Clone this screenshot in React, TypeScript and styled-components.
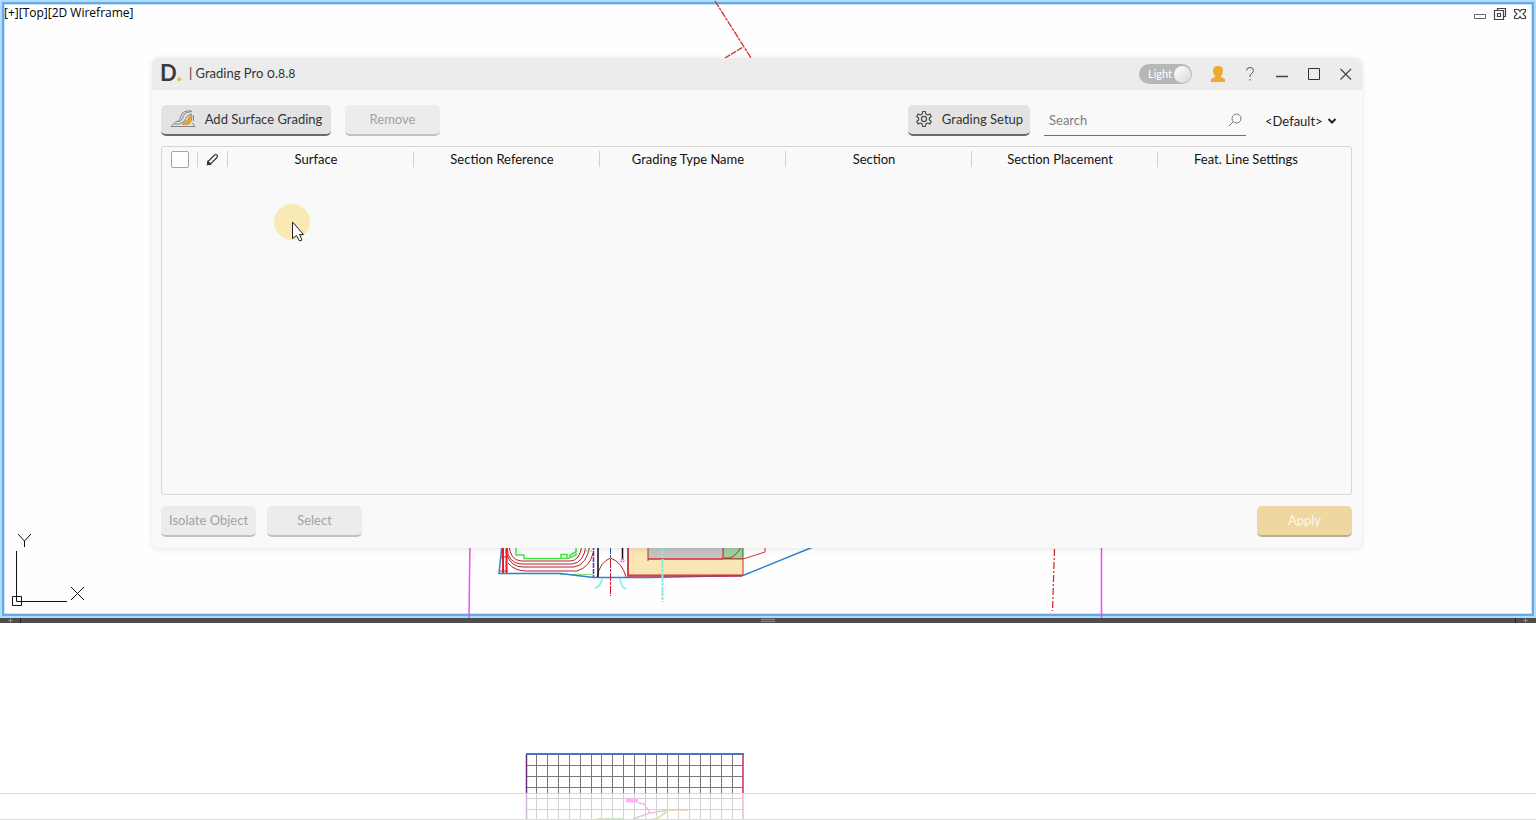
import React from "react";
import styled, { createGlobalStyle } from "styled-components";

const GlobalStyle = createGlobalStyle`
  *, *::before, *::after { box-sizing: border-box; }
  body {
    margin: 0;
    background: #ffffff;
    font-family: Lato, "Open Sans", sans-serif;
    font-size: 13px;
    line-height: 16px;
    color: #222222;
  }
  button, input, select { font: inherit; color: inherit; }
`;

const Screen = styled.main`
  display: grid;
  grid-template-rows: minmax(0, 618fr) 5px minmax(0, 197fr);
  height: 100vh;
  overflow: hidden;
`;

const Viewport = styled.section`
  position: relative;
  overflow: hidden;
  background: #fefefe;
`;

const ViewportFrame = styled.div`
  position: absolute;
  inset: 0;
  border: 2px solid #b3dcf8;
  box-shadow: inset 0 0 0 2px #65a9ec, inset 0 0 0 3px #c2e2fa;
  pointer-events: none;
`;

const Drawing = styled.svg`
  position: absolute;
  top: 0;
  left: 0;
  width: 100%;
  height: 100%;
  fill: none;
`;

const ViewportBar = styled.header`
  position: relative;
  display: flex;
  justify-content: space-between;
  padding: 5px 8px 0 4px;
`;

const ViewLabel = styled.span`
  font-family: "Open Sans", sans-serif;
  font-size: 12px;
  color: #000000;
`;

const ViewControls = styled.div`
  display: flex;
  gap: 4px;
`;

const PlainButton = styled.button<{ $w: number; $h: number }>`
  display: flex;
  align-items: center;
  justify-content: center;
  width: ${(p) => p.$w}px;
  height: ${(p) => p.$h}px;
  padding: 0;
  border: 0;
  background: none;
`;

const Splitter = styled.div`
  display: flex;
  align-items: center;
  justify-content: space-between;
  padding: 0 8px;
  background: #4d4d4f;
  svg { display: block; }
`;

const LowerView = styled.section`
  position: relative;
  display: flex;
  flex-direction: column;
  justify-content: flex-end;
  overflow: hidden;
  background: #ffffff;
`;

const CommandStrip = styled.div`
  position: relative;
  height: 27px;
  border: solid #d9d9d9;
  border-width: 1px 0;
  background: rgba(255, 255, 255, 0.68);
`;

const Dialog = styled.section`
  position: absolute;
  top: 58px;
  left: 152px;
  right: 174px;
  bottom: 70px;
  display: flex;
  flex-direction: column;
  border-radius: 6px;
  background: #f9f9f9;
  box-shadow: 0 1px 6px rgba(0, 0, 0, 0.1);
`;

const TitleBar = styled.header`
  display: flex;
  align-items: center;
  flex: none;
  height: 32px;
  padding-left: 8px;
  border-radius: 6px 6px 0 0;
  background: #ececec;
`;

const Title = styled.h1`
  flex: 1;
  margin: 0 0 0 10px;
  padding-bottom: 2px;
  font-size: 13px;
  font-weight: 400;
  font-variant-numeric: oldstyle-nums proportional-nums;
  color: #333333;
`;

const Logo = styled.span`
  width: 19px;
  padding-bottom: 2px;
  font: 700 22px/24px "Noto Sans", sans-serif;
  font-family: Lato, sans-serif;
  white-space: nowrap;
  color: #3c3c3c;
  b { color: #e9b44c; }
`;

const ThemeToggle = styled.button`
  display: flex;
  align-items: center;
  justify-content: space-between;
  width: 53px;
  height: 20px;
  margin-right: 10px;
  padding: 0 1px 0 9px;
  border: 0;
  border-radius: 10px;
  background: #b7b7b7;
  font-size: 11px;
  color: #ffffff;
`;

const Knob = styled.span`
  width: 17px;
  height: 17px;
  border-radius: 50%;
  background: linear-gradient(135deg, #ffffff, #d8d8d8);
`;

const Content = styled.div`
  display: flex;
  flex: 1;
  flex-direction: column;
  min-height: 0;
  padding: 15px 10px 11px 9px;
`;

const Row = styled.div<{ $gap: number }>`
  display: flex;
  align-items: center;
  justify-content: space-between;
  flex: none;
  gap: ${(p) => p.$gap}px;
`;

const Group = styled.div<{ $gap: number }>`
  display: flex;
  align-items: center;
  gap: ${(p) => p.$gap}px;
`;

const Button = styled.button<{ $w: number; $kind?: "primary" }>`
  display: flex;
  align-items: center;
  justify-content: center;
  gap: 9px;
  width: ${(p) => p.$w}px;
  height: 31px;
  padding: 0 0 1px;
  border: 0;
  border-bottom: 2px solid #6b6b6b;
  border-radius: 5px;
  background: #e3e3e3;
  white-space: nowrap;
  color: #333333;
  svg { flex: none; }
  &:disabled {
    border-bottom: 2px solid ${(p) => (p.$kind ? "#b9ae9c" : "#c0c0c0")};
    background: ${(p) => (p.$kind ? "#efd7a2" : "#ececec")};
    color: ${(p) => (p.$kind ? "#fdf7e8" : "#a3a3a3")};
  }
`;

const SearchBox = styled.label`
  display: flex;
  align-items: center;
  width: 202px;
  height: 31px;
  padding: 0 4px 0 5px;
  border-bottom: 1px solid #6e6e6e;
  input {
    flex: 1;
    min-width: 0;
    padding: 0;
    border: 0;
    outline: 0;
    background: none;
  }
  input::placeholder { color: #7d7d7d; opacity: 1; }
`;

const ProfilePicker = styled.label`
  display: flex;
  align-items: center;
  width: 87px;
  margin-left: 5px;
  select {
    width: 62px;
    padding: 0;
    border: 0;
    appearance: none;
    background: none;
  }
`;

const TableFrame = styled.div`
  flex: 1;
  min-height: 0;
  margin: 10px 0 11px;
  padding-right: 7px;
  border: 1px solid #d6d6d6;
  border-radius: 3px;
  overflow: auto;
`;

const Table = styled.table`
  width: 100%;
  border-collapse: collapse;
  table-layout: fixed;
  color: #111111;
  th { padding: 4px 0; font-weight: 400; }
`;

const HeadCell = styled.div<{ $tool?: boolean; $last?: boolean }>`
  display: flex;
  align-items: center;
  justify-content: center;
  height: 16px;
  padding-right: ${(p) => (p.$tool ? 0 : 9)}px;
  border-right: 1px solid ${(p) => (p.$last ? "transparent" : "#d0d0d0")};
`;

const SelectAll = styled.input`
  appearance: none;
  flex: none;
  width: 18px;
  height: 17px;
  margin: 0;
  border: 1px solid #a5a5a5;
  border-radius: 2px;
  background: #ffffff;
`;

const Pointer = styled.div`
  position: absolute;
  top: 146px;
  left: 122px;
  width: 36px;
  height: 40px;
  pointer-events: none;
`;

const columns = [
  "Surface",
  "Section Reference",
  "Grading Type Name",
  "Section",
  "Section Placement",
  "Feat. Line Settings",
];

function SiteDrawing() {
  return (
    <Drawing aria-hidden="true">
      <g stroke="#d03030" strokeWidth="1.3">
        <path d="M715 1 751 58" strokeDasharray="7 1 3 1" />
        <path d="M725 58 743 47" strokeDasharray="6 1" />
        <path d="M1054.5 549 1052.5 611" strokeDasharray="7 2 2 2" />
      </g>
      <path d="M470 540 469 618M1101.5 540V618" stroke="#f04cf0" strokeWidth="1.5" />
      <path d="M628 540H743V575H628Z" fill="#f8e6b4" stroke="#d02a35" />
      <path d="M648 540H723V559H648Z" fill="#c3c3c3" stroke="#d02a35" />
      <path d="M723.5 540H742.5V558.5H723.5Z" fill="#9fcf9c" stroke="#4aa04a" />
      <path d="M724 558H730Q737 555 741 547" stroke="#a33" />
      <path d="M648 559V561M648 559H743L765 552V540" stroke="#e02a35" />
      <g stroke="#b5202c">
        <path d="M509 545Q510 560 521 561H570Q580 561 582 545" />
        <path d="M507 548Q508 563 521 564H572Q584 563 586 545" />
        <path d="M507 555Q511 567 523 567H574Q587 565 590 545" />
        <path d="M508 563Q515 571 526 571H577Q590 567 593 553" />
        <path d="M597 577Q600 562 610.5 558Q622 562 626 577" />
      </g>
      <path d="M516 545V555H524V558.5H568L576 555V545M561 558V554.5H567V558M569 556 577 551" stroke="#42e642" strokeWidth="1.5" />
      <path d="M560 574.5H593M585 545V551H592" stroke="#8ddd86" />
      <path d="M503 545V573M506.5 545V573" stroke="#f01820" strokeWidth="2" />
      <path d="M500 557H508M500 571H508" stroke="#f01820" />
      <path d="M502 545 499 573.5H560L594 577.5H650L743 575.5 818 545" stroke="#2b82d0" strokeWidth="1.5" />
      <path d="M593.5 545V577" stroke="#5a28d8" strokeDasharray="5 1" strokeWidth="1.5" />
      <path d="M598 545V577M622.5 545V559" stroke="#0b0b18" strokeWidth="1.5" />
      <circle cx="622.5" cy="560.5" r="1.5" stroke="#d840d8" />
      <path d="M628 545V576H742" stroke="#c92a40" strokeWidth="1.5" />
      <path d="M610.5 545V577" stroke="#2860a8" strokeDasharray="9 1 3 1" />
      <path d="M610.5 560V596" stroke="#c41e2a" strokeDasharray="8 1 3 1" />
      <path d="M595 588Q601 586 602 579M620 579Q621 587 626 589" stroke="#8ff0f0" strokeWidth="2" />
      <path d="M662.5 545V602" stroke="#84ebe9" strokeWidth="2" strokeDasharray="9 1 3 1" />
      <g stroke="#111111">
        <path d="M16.5 551V601.5H67M12.5 596.5H21.5V605.5H12.5Z" />
        <path d="M18 534 24.5 541 31 534M24.5 541V547M71 587 84 600M84 587 71 600" />
      </g>
    </Drawing>
  );
}

function ProfileDrawing() {
  const verticals = Array.from({ length: 19 }, (_, i) => 537 + Math.round(i * 10.9));
  const rows = [142, 153, 164, 175, 186];
  return (
    <Drawing aria-hidden="true">
      <g stroke="#77777b">
        {verticals.map((x) => <path key={x} d={`M${x - 0.5} 132V197`} />)}
        {rows.map((y) => <path key={y} d={`M526 ${y}.5H743`} />)}
      </g>
      <path d="M526.5 131V197" stroke="#6a2a78" strokeWidth="1.5" />
      <path d="M743 131V197" stroke="#d02858" strokeWidth="1.5" />
      <path d="M526 131H744" stroke="#4a72c0" strokeWidth="2" />
      <path d="M626 177.5H638" stroke="#ff10f8" strokeWidth="4" />
      <path d="M638 180 644 181 650 190 663 188 669 187H688M650 190 633 196" stroke="#c63a92" strokeWidth="1.5" />
      <path d="M597 196H624M651 197 658 195 669 187" stroke="#70c020" strokeWidth="2" />
      <path d="M669 187.5H688" stroke="#d98a50" />
    </Drawing>
  );
}

function GradingIcon() {
  return (
    <svg width="26" height="18" viewBox="0 0 26 18" fill="none" stroke="#858585">
      <path d="M12.500 14.500 15 11.500 18 10 19 7 22 5 21.500 10 19 14Z" fill="#eba93a" stroke="#c98d36" />
      <path d="M1 16.500 6 11.500H9Q12 11 13 7Q14 3 17 2.500L22 1.500M1 16.500H25L22 12.500M23.500 5.500V11" />
      <path d="M4 14H9Q14 13 15.500 9Q16.500 5.500 19 5L22 4M8 11.500Q10 10 11 6Q12 2 15 1.500L21 .500" />
    </svg>
  );
}

function GearIcon() {
  return (
    <svg width="18" height="18" viewBox="0 0 24 24" fill="none" stroke="#4a4a4a" strokeWidth="1.6" strokeLinejoin="round">
      <path d="M9.6 5.200 10.200 2H13.800L14.400 5.200 16.800 6.600 19.900 5.500 21.700 8.600 19.200 10.700V13.300L21.700 15.400 19.900 18.500 16.800 17.400 14.400 18.800 13.800 22H10.200L9.600 18.800 7.200 17.400 4.100 18.500 2.300 15.400 4.800 13.300V10.700L2.300 8.600 4.100 5.500 7.200 6.600Z" />
      <circle cx="12" cy="12" r="3.4" />
    </svg>
  );
}

function PencilIcon() {
  return (
    <svg width="13" height="13" viewBox="0 0 13 13" fill="none" stroke="#333" strokeWidth="1.2">
      <path d="M1.500 11.500 2 8.500 8.500 2Q10 1 11 2T11 4.500L4.500 11Z" />
      <path d="M1.500 11.500 2 8.500 4.500 11Z" fill="#333" />
    </svg>
  );
}

function Grip({ tickLeft }: { tickLeft?: boolean }) {
  return (
    <svg width="13" height="5">
      <path d={tickLeft ? "M8 2.5H13M10.5 0V5" : "M0 2.5H5M2.5 0V5"} stroke="#8b8b8b" />
      <path d={tickLeft ? "M.5 0V5" : "M12.5 0V5"} stroke="#1e1e1e" />
    </svg>
  );
}

export default function App() {
  return (
    <>
      <GlobalStyle />
      <Screen>
        <Viewport>
          <ViewportFrame />
          <SiteDrawing />
          <ViewportBar>
            <ViewLabel>[+][Top][2D Wireframe]</ViewLabel>
            <ViewControls>
              <PlainButton $w={16} $h={18} aria-label="Minimize view">
                <svg width="14" height="14" fill="#fff" stroke="#666"><path d="M1.5 7.500H12.500V11.500H1.500Z" /></svg>
              </PlainButton>
              <PlainButton $w={16} $h={18} aria-label="Restore view">
                <svg width="14" height="14" fill="#fff" stroke="#444" strokeWidth="1.2">
                  <path d="M4.500 1.500H12.500V9.500H4.500Z" />
                  <path d="M1.500 3.500H10.500V12.500H1.500Z" />
                  <path d="M4.500 6.500H7.500V9.500H4.500Z" />
                </svg>
              </PlainButton>
              <PlainButton $w={16} $h={18} aria-label="Close view">
                <svg width="14" height="14" fill="#fff" stroke="#444" strokeWidth="1.2">
                  <path d="M1.500 2.500H5.500L7 4.500 8.500 2.500H12.500V4.500L10 7 12.500 9.500V11.500H8.500L7 9.500 5.500 11.500H1.500V9.500L4 7 1.500 4.500Z" />
                </svg>
              </PlainButton>
            </ViewControls>
          </ViewportBar>

          <Dialog aria-label="Grading Pro">
            <TitleBar>
              <Logo>D<b>.</b></Logo>
              <Title>| Grading Pro 0.8.8</Title>
              <ThemeToggle>Light<Knob /></ThemeToggle>
              <PlainButton $w={32} $h={32} aria-label="Account">
                <svg width="16" height="18" fill="#efa92f">
                  <path d="M8 1Q13 1 13 6Q13 9 11 11V12L15 14V17H1V14L5 12V11Q3 9 3 6Q3 1 8 1Z" />
                </svg>
              </PlainButton>
              <PlainButton $w={32} $h={32} aria-label="Help">
                <svg width="10" height="16" fill="none" stroke="#555">
                  <path d="M1.500 4.500Q1.500 1.500 5 1.500T8.500 4.500Q8.500 6 6.500 7.500T5 11M5 13V14.500" />
                </svg>
              </PlainButton>
              <PlainButton $w={32} $h={32} aria-label="Minimize">
                <svg width="14" height="14" stroke="#444"><path d="M1 9.500H13" strokeWidth="1.5" /></svg>
              </PlainButton>
              <PlainButton $w={32} $h={32} aria-label="Maximize">
                <svg width="14" height="14" fill="none" stroke="#333"><path d="M1.500 1.500H12.500V12.500H1.500Z" /></svg>
              </PlainButton>
              <PlainButton $w={32} $h={32} aria-label="Close">
                <svg width="14" height="14" stroke="#444"><path d="M1.500 2 12 12.500M12 2 1.500 12.500" strokeWidth="1.2" /></svg>
              </PlainButton>
            </TitleBar>

            <Content>
              <Row $gap={14}>
                <Group $gap={14}>
                  <Button $w={170}><GradingIcon />Add Surface Grading</Button>
                  <Button $w={95} disabled>Remove</Button>
                </Group>
                <Group $gap={14}>
                  <Button $w={122}><GearIcon />Grading Setup</Button>
                  <SearchBox>
                    <input type="text" placeholder="Search" aria-label="Search" />
                    <svg width="14" height="14" fill="none" stroke="#777">
                      <circle cx="8.5" cy="5.5" r="4.500" /><path d="M5.500 8.500 1 13" />
                    </svg>
                  </SearchBox>
                  <ProfilePicker>
                    <select aria-label="Profile"><option>&lt;Default&gt;</option></select>
                    <svg width="10" height="8" fill="none" stroke="#222" strokeWidth="2"><path d="M1.500 2 5 5.500 8.500 2" /></svg>
                  </ProfilePicker>
                </Group>
              </Row>

              <TableFrame>
                <Table>
                  <colgroup>
                    <col width="36" />
                    <col width="30" />
                    {columns.map((c) => <col key={c} />)}
                  </colgroup>
                  <thead>
                    <tr>
                      <th>
                        <HeadCell $tool><SelectAll type="checkbox" aria-label="Select all rows" /></HeadCell>
                      </th>
                      <th aria-label="Edit"><HeadCell $tool><PencilIcon /></HeadCell></th>
                      {columns.map((c, i) => (
                        <th key={c} scope="col"><HeadCell $last={i === columns.length - 1}>{c}</HeadCell></th>
                      ))}
                    </tr>
                  </thead>
                </Table>
              </TableFrame>

              <Row $gap={11}>
                <Group $gap={11}>
                  <Button $w={95} disabled>Isolate Object</Button>
                  <Button $w={95} disabled>Select</Button>
                </Group>
                <Button $w={95} $kind="primary" disabled>Apply</Button>
              </Row>
            </Content>
            <Pointer aria-hidden="true">
              <svg width="36" height="40">
                <circle cx="18" cy="18" r="18" fill="#f9e9b5" />
                <path d="M18.500 18V34.500L22.500 31.500 25.500 37 28 36 25.500 30.500H29.500Z" fill="#fff" stroke="#222" />
              </svg>
            </Pointer>
          </Dialog>
        </Viewport>
        <Splitter>
          <Grip />
          <svg width="14" height="5" stroke="#8b8b8b"><path d="M0 1.500H14M0 3.500H14" /></svg>
          <Grip tickLeft />
        </Splitter>
        <LowerView>
          <ProfileDrawing />
          <CommandStrip />
        </LowerView>
      </Screen>
    </>
  );
}
